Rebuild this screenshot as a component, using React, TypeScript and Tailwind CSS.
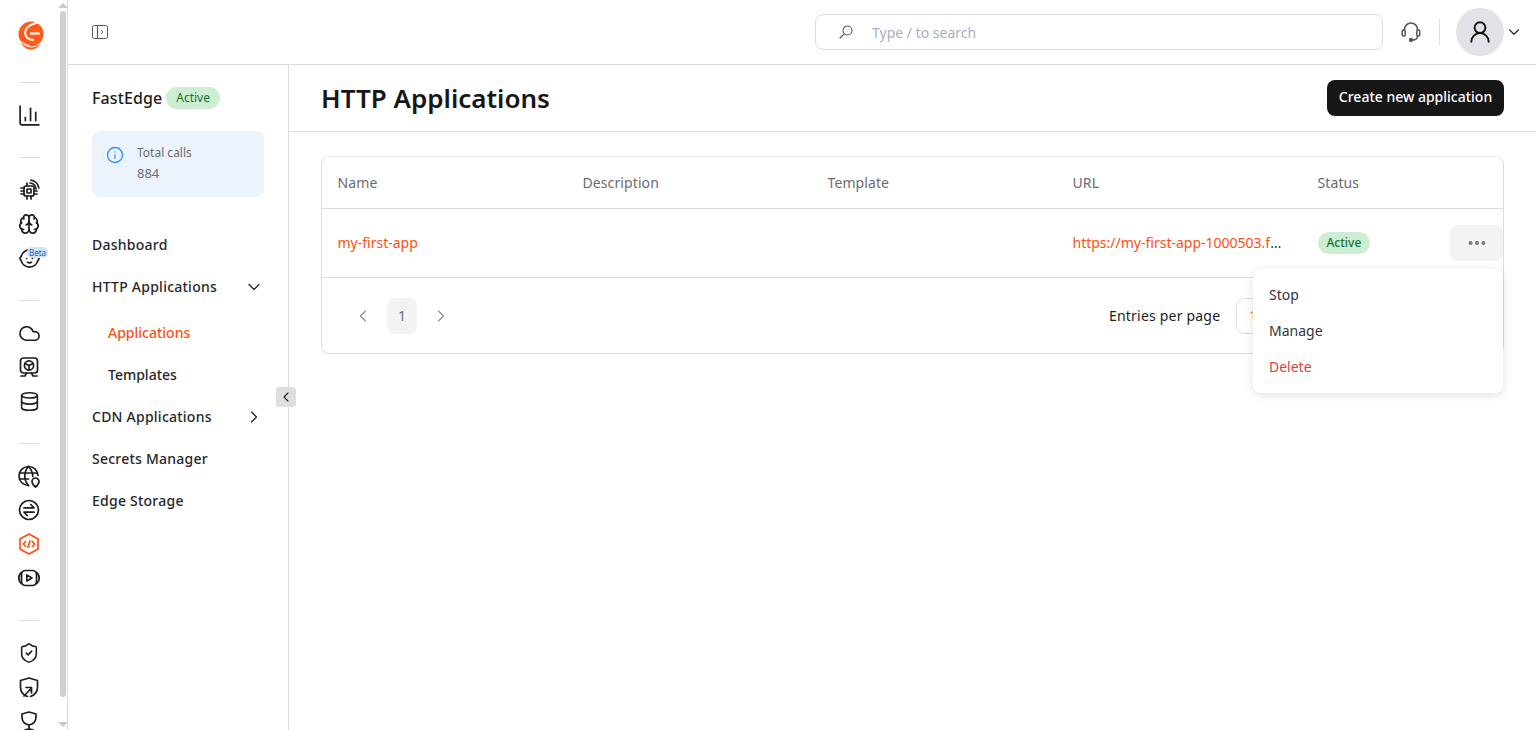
import React from "react";
import { Baby, Brain, ChartColumn, ChevronDown, ChevronLeft, ChevronRight, Cloud, Database, Ellipsis, Info, ShieldCheck, UserRound } from "lucide-react";

const S = ({ children, cls = "text-[#1d1d1f]" }: { children: React.ReactNode; cls?: string }) => (
  <svg viewBox="0 0 24 24" width="24" height="24" fill="none" stroke="currentColor" strokeWidth="1.7" strokeLinecap="round" strokeLinejoin="round" className={cls}>
    {children}
  </svg>
);

const Chip = () => (
  <S>
    <rect x="7" y="8" width="10" height="10" rx="2" />
    <rect x="10" y="11" width="4" height="4" rx="0.6" />
    <path d="M4 10h3M4 13h3M4 16h3M17 13h3M17 16h3M10 18v3M14 18v3M10 5v3" />
    <path d="M13 5a6 6 0 0 1 6 6M14 2.200A9 9 0 0 1 21.800 10" />
  </S>
);
const WheelMonitor = () => (
  <S>
    <rect x="3.500" y="3" width="17" height="15" rx="3" />
    <circle cx="12" cy="10.500" r="4.600" />
    <path d="M12 10.500v4.500M12 10.500 8 8.500M12 10.500l4-2M4 21h4l1.500-3M20 21h-4l-1.500-3" />
  </S>
);
const GlobePin = () => (
  <S>
    <path d="M21 11.500a9.500 9.500 0 1 0-9.500 10" />
    <path d="M2.500 9h18M2.500 15h9M11.500 2.500c-5 5.500-5 13.500 0 19M11.500 2.500c3 3.300 4.300 7 4.300 10" />
    <path d="M18.500 23s-3.500-2.800-3.500-5.500a3.500 3.500 0 0 1 7 0c0 2.700-3.500 5.500-3.500 5.500z" fill="#fff" />
  </S>
);
const Transfer = () => (
  <S>
    <circle cx="12" cy="12" r="9.500" />
    <path d="M7 9.800h10l-3.200-3.300M17 14.200H7l3.200 3.300" />
  </S>
);
const CodeHex = () => (
  <S cls="text-[#ff4f12]">
    <path d="M12 2 21 7v10l-9 5-9-5V7z" />
    <path d="M8.500 9.500 6.500 12l2 2.500M15.500 9.500l2 2.500-2 2.500M13 8.800l-2 6.400" />
  </S>
);
const Video = () => (
  <S>
    <rect x="4.500" y="4.500" width="15" height="15" rx="4" />
    <path d="M4.500 6.500C2.500 8 1.800 10 1.800 12s.7 4 2.700 5.500M19.500 6.500c2 1.500 2.700 3.500 2.700 5.500s-.7 4-2.700 5.500" />
    <path d="M9.800 9v6l5.200-3z" />
  </S>
);
const ShieldArrow = () => (
  <S>
    <path d="M10.500 21.500C6 20 3.500 16.500 3.500 12V5.500L12 3l8.500 2.500V12c0 4.500-2.500 8-7 9.500" />
    <path d="M7 21l7.500-8M9 12.500h5.500V18" />
  </S>
);
const ShieldTree = () => (
  <S>
    <path d="M12 16c-4.500-1-7-3.800-7-8V5l7-2 7 2v3c0 4.200-2.500 7-7 8z" />
    <path d="M12 16v4.500M6.500 22c1.500-1.500 3.500-1.800 5.500-1.800s4 .3 5.500 1.800" />
  </S>
);
const Logo = () => (
  <svg viewBox="0 0 26 30" width="26" height="30" className="ml-[3px]">
    <circle cx="13" cy="14" r="12.500" fill="#ff5a1a" />
    <path d="M3 22c4 6.500 14 7.500 20 1-3 6-9 7.500-13 6.300-3-.9-5.500-3.300-7-7.300z" fill="#ff5a1a" />
    <path d="M3.500 21c2 2.700 5 4 8 4.300" stroke="#fff" strokeWidth="1" fill="none" />
    <path d="M26 2.500C16 1.800 7.500 6 7.200 12.500c-.2 4.700 3.700 7.700 8 7.300" stroke="#fff" strokeWidth="2" fill="none" strokeLinecap="round" />
    <path d="M12 13.500H22" stroke="#fff" strokeWidth="2.200" />
  </svg>
);

const Row = ({ children }: { children: React.ReactNode }) => (
  <div className="relative flex h-[34px] w-full shrink-0 items-center justify-center">{children}</div>
);
const Divider = () => <div className="mt-[25px] mb-[15px] h-px w-5 shrink-0 bg-[#dcdcdc]" />;

const lucideCls = "text-[#1d1d1f]";

function Rail() {
  return (
    <aside className="flex h-[730px] w-[68px] shrink-0 overflow-hidden border-r border-[#dcdcdc]">
      <div className="flex w-[58px] shrink-0 flex-col items-center pt-[13px]">
        <div className="flex h-[44px] shrink-0 items-center justify-center"><Logo /></div>
        <Divider />
        <Row><ChartColumn size={25} strokeWidth={1.600} className={lucideCls} /></Row>
        <Divider />
        <Row><Chip /></Row>
        <Row><Brain size={22} strokeWidth={1.900} className={lucideCls} /></Row>
        <Row>
          <Baby size={23} strokeWidth={1.800} className={lucideCls} />
          <span className="absolute top-[6px] left-[27px] rounded-[5px] bg-[#cfe3fb] px-[2px] text-[8px] leading-[11px] text-[#1f5fa8]">Beta</span>
        </Row>
        <Divider />
        <Row><Cloud size={23} strokeWidth={1.700} className={lucideCls} /></Row>
        <Row><WheelMonitor /></Row>
        <Row><Database size={21} strokeWidth={1.800} className={lucideCls} /></Row>
        <Divider />
        <Row><GlobePin /></Row>
        <Row><Transfer /></Row>
        <Row><CodeHex /></Row>
        <Row><Video /></Row>
        <Divider />
        <Row><ShieldCheck size={22} strokeWidth={1.700} className={lucideCls} /></Row>
        <Row><ShieldArrow /></Row>
        <Row><ShieldTree /></Row>
      </div>
      <div className="flex w-[9px] shrink-0 flex-col items-center">
        <div className="mt-[3px] h-0 w-0 border-x-[5px] border-b-[5px] border-x-transparent border-b-[#c9c8cd]" />
        <div className="mt-[3px] h-[686px] w-[6px] rounded-full bg-[#cfced3]" />
        <div className="mt-[25px] h-0 w-0 border-x-[5px] border-t-[5px] border-x-transparent border-t-[#c9c8cd]" />
      </div>
    </aside>
  );
}

function TopBar() {
  return (
    <header className="flex h-[65px] shrink-0 items-center border-b border-[#dcdcdc] pr-[13px] pl-[24px]">
      <svg viewBox="0 0 16 16" width="16" height="16" fill="none" stroke="#55555a" strokeWidth="1" className="shrink-0">
        <rect x="0.500" y="1.500" width="15" height="13" rx="2" />
        <path d="M5.500 1.500v13M9 6l2 2-2 2" />
      </svg>
      <div className="ml-[707px] flex h-[36px] w-[568px] shrink-0 items-center rounded-lg border border-[#dedee0] pl-[22px]">
        <svg viewBox="0 0 16 16" width="16" height="16" fill="none" stroke="#55555a" strokeWidth="1.100">
          <circle cx="9.500" cy="6.500" r="4.500" />
          <path d="M6.200 9.800 2 14" strokeLinecap="round" />
        </svg>
        <span className="ml-[18px] pt-[2px] text-sm text-[#adadbd]">Type / to search</span>
      </div>
      <svg viewBox="0 0 24 24" width="24" height="24" fill="none" stroke="#55555a" strokeWidth="1.500" className="ml-[16px] shrink-0" strokeLinecap="round">
        <path d="M5.500 11V9.500a6.500 6.500 0 0 1 13 0V11" />
        <rect x="3.200" y="10" width="3" height="6" rx="1.200" fill="#fff" />
        <rect x="17.800" y="10" width="3" height="6" rx="1.200" fill="#fff" />
        <path d="M18.500 16c0 2.500-1.500 4-5 4" />
        <circle cx="12" cy="20" r="1.400" fill="#55555a" />
      </svg>
      <div className="mr-[16px] ml-[16px] h-[26px] w-px shrink-0 bg-[#e0e0e0]" />
      <div className="flex h-12 w-12 shrink-0 items-center justify-center rounded-full bg-[#e4e2e8]">
        <UserRound size={26} strokeWidth={1.800} className="text-[#111]" />
      </div>
      <ChevronDown size={18} strokeWidth={1.500} className="ml-[1px] shrink-0 text-[#222]" />
    </header>
  );
}

function NavItem({ label, icon }: { label: string; icon?: React.ReactNode }) {
  return (
    <div className="flex h-[42px] items-center justify-between pr-[24px] text-sm font-medium tracking-[0.24px] text-[#26262b]">
      <span>{label}</span>
      {icon}
    </div>
  );
}

function Sidebar() {
  return (
    <nav className="relative w-[221px] shrink-0 border-r border-[#dcdcdc] pt-[22px] pl-[24px]">
      <div className="flex h-[22px] items-center gap-[4px]">
        <span className="text-base font-medium tracking-[0.1px] text-[#1d1d1f]">FastEdge</span>
        <span className="rounded-full bg-[#cdeed2] px-[10px] text-xs leading-[22px] text-[#17733b]">Active</span>
      </div>
      <div className="mt-[22px] flex h-[66px] w-[172px] rounded-lg bg-[#ebf3fd] pt-[15px] pl-[14px]">
        <Info size={18} strokeWidth={1.800} className="text-[#2f8fff]" />
        <div className="mt-[1px] ml-[13px] text-[#6b6b70]">
          <div className="text-xs leading-[12px]">Total calls</div>
          <div className="mt-[4px] text-[13px] leading-[20px]">884</div>
        </div>
      </div>
      <div className="mt-[27px]">
        <NavItem label="Dashboard" />
        <NavItem label="HTTP Applications" icon={<ChevronDown size={20} strokeWidth={1.500} />} />
        <div className="mt-[4px] flex h-[42px] items-center pl-4 text-sm font-medium text-[#ff4f12]">Applications</div>
        <div className="flex h-[42px] items-center pl-4 text-sm font-medium text-[#26262b]">Templates</div>
        <NavItem label="CDN Applications" icon={<ChevronRight size={20} strokeWidth={1.500} />} />
        <NavItem label="Secrets Manager" />
        <NavItem label="Edge Storage" />
      </div>
      <button className="absolute top-[322px] left-[208px] flex h-5 w-5 items-center justify-center rounded-[3px] bg-[#dfdfe1]">
        <ChevronLeft size={16} strokeWidth={1.700} className="text-[#222]" />
      </button>
    </nav>
  );
}

const cols = ["Name", "Description", "Template", "URL", "Status"];

function Table() {
  return (
    <div className="relative mx-[32px] mt-[24px] h-[198px] rounded-lg border border-[#dedee0] border-t-[#ececee]">
      <div className="flex h-[52px] items-center overflow-hidden border-b border-[#dedee0] text-sm tracking-[0.1px] text-[#6b6b70]">
        {cols.map((c) => (
          <div key={c} className="w-[245px] shrink-0 pl-[15.5px]">{c}</div>
        ))}
      </div>
      <div className="flex h-[69px] items-center border-b border-[#dedee0] text-sm">
        <div className="w-[735px] shrink-0 pl-[15.5px] text-[#ff4f12]">my-first-app</div>
        <div className="w-[245px] shrink-0 pl-[15.5px]">
          <div className="w-[211px] truncate text-[#1c3a78]"><span className="text-[#ff4f12]">https://my-first-app-1000503.fastedge.app</span></div>
        </div>
        <div className="flex w-[148px] shrink-0 items-center pl-[15.5px]">
          <span className="rounded-full bg-[#cdeed2] px-[9px] text-xs leading-[22px] font-medium text-[#17733b]">Active</span>
        </div>
        <div className="flex h-9 w-[53px] shrink-0 items-center justify-center rounded-lg bg-[#f3f3f4]">
          <Ellipsis size={22} strokeWidth={2.400} className="text-[#77777c]" />
        </div>
      </div>
      <div className="flex h-[75px] items-center pl-[31px] text-sm">
        <ChevronLeft size={20} strokeWidth={1.300} className="text-[#85858c]" />
        <div className="mx-[14px] flex h-9 w-[30px] items-center justify-center rounded-lg bg-[#f3f3f4] text-[#6b6b70]">1</div>
        <ChevronRight size={20} strokeWidth={1.300} className="text-[#85858c]" />
        <span className="ml-[658px] font-normal tracking-[0.2px] text-[#1d1d1f]">Entries per page</span>
        <div className="ml-4 flex h-9 w-[60px] items-center rounded-lg border border-[#dedee0] pl-3 text-[#d08a3a]">10</div>
      </div>
      <div className="absolute top-[112px] right-0 flex h-[124px] w-[250px] flex-col rounded-lg bg-white py-[8px] pl-4 text-sm text-[#35353a] shadow-[0_2px_10px_rgba(0,0,0,0.12)]">
        <div className="flex h-9 items-center">Stop</div>
        <div className="flex h-9 items-center">Manage</div>
        <div className="flex h-9 items-center text-[#e43d3d]">Delete</div>
      </div>
    </div>
  );
}

export default function App() {
  return (
    <div className="flex h-[730px] w-[1536px] overflow-hidden bg-white font-['Noto_Sans','Open_Sans',sans-serif]">
      <Rail />
      <div className="flex min-w-0 flex-1 flex-col">
        <TopBar />
        <div className="flex flex-1">
          <Sidebar />
          <main className="min-w-0 flex-1">
            <div className="flex h-[67px] items-center justify-between border-b border-[#dcdcdc] pr-[32px] pl-[32px]">
              <h1 className="text-[26px] font-semibold text-[#17171a]">HTTP Applications</h1>
              <button className="h-9 w-[177px] rounded-lg bg-[#161616] pb-[2px] text-sm font-medium text-white">Create new application</button>
            </div>
            <Table />
          </main>
        </div>
      </div>
    </div>
  );
}
